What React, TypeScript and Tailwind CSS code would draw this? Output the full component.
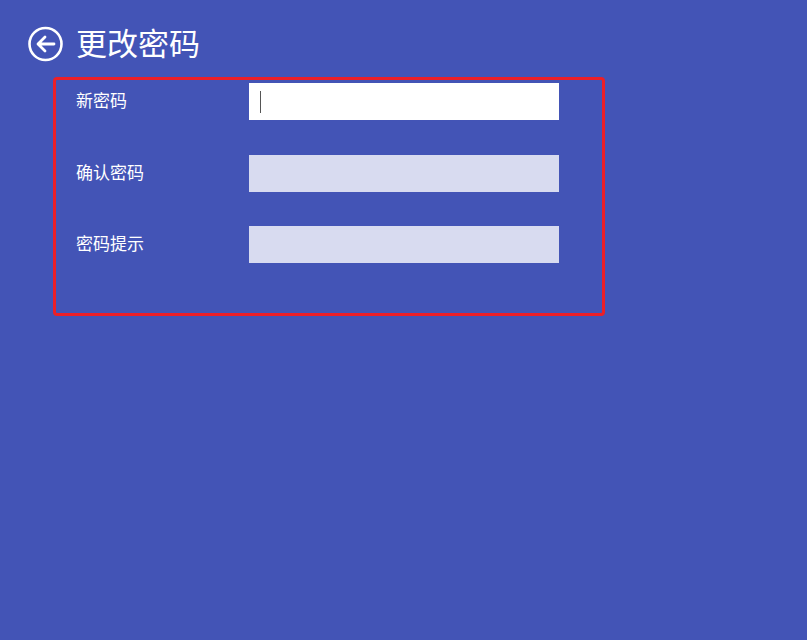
export default function App() {
  const rows = [
    { label: '新密码', active: true },
    { label: '确认密码', active: false },
    { label: '密码提示', active: false },
  ]

  return (
    <div
      className="w-[807px] h-[640px] bg-[#4354b6] text-white overflow-hidden"
      style={{ fontFamily: '"Noto Sans CJK SC", "Noto Sans", sans-serif' }}
    >
      <div className="flex items-center pl-[28px] pt-[24px] h-[64px]">
        <svg width="36" height="36" viewBox="0 0 36 36" fill="none">
          <circle cx="17.5" cy="18" r="16" stroke="white" strokeWidth="2.6" />
          <path d="M26 18H10.5M17 11l-7 7 7 7" stroke="white" strokeWidth="2.8" strokeLinecap="round" strokeLinejoin="round" />
        </svg>
        <h1 className="ml-[12px] -mt-[5px] text-[31px] leading-none font-normal">更改密码</h1>
      </div>

      <div className="ml-[53px] mt-[13px] w-[552px] h-[239px] border-[3px] border-[#ec1f27] rounded-[4px] pt-[3px] pl-[20px]">
        <div className="flex flex-col gap-[34px]">
          {rows.map(row => (
            <div key={row.label} className="flex items-start h-[37.5px]">
              <span className="w-[173px] text-[17px] leading-[37px] -mt-[2px]">{row.label}</span>
              <div
                className={
                  row.active
                    ? 'w-[310px] h-[37px] bg-white flex items-center pl-[11px]'
                    : 'w-[310px] h-[37px] bg-[#d8dbf0]'
                }
              >
                {row.active && <div className="w-[1px] h-[22px] bg-[#555]" />}
              </div>
            </div>
          ))}
        </div>
      </div>
    </div>
  )
}
